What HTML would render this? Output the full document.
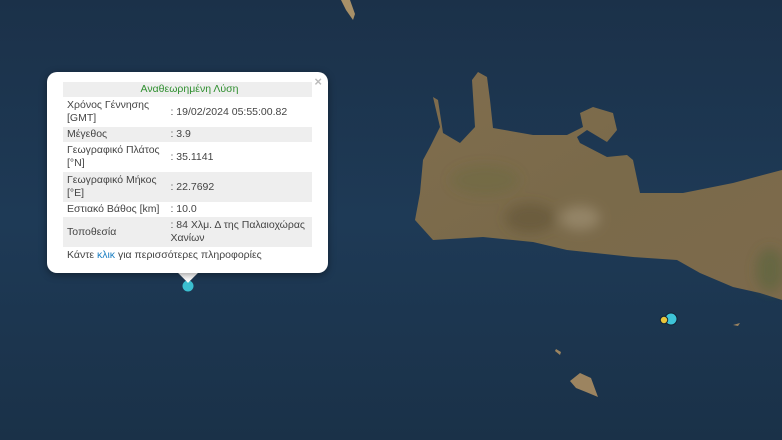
<!DOCTYPE html>
<html><head><meta charset="utf-8">
<style>
html,body{margin:0;padding:0;width:782px;height:440px;overflow:hidden;background:#1c3550;}
#map{position:absolute;left:0;top:0;width:782px;height:440px;}
.pop{position:absolute;left:47px;top:72px;width:281px;height:201px;background:#fff;border-radius:10px;box-shadow:0 2px 8px rgba(0,0,0,.4);font-family:"Liberation Sans","Noto Sans CJK SC",sans-serif;font-size:10.5px;color:#444;}
.tip{position:absolute;left:181px;top:266px;width:14px;height:14px;background:#fff;transform:rotate(45deg);}
.x{position:absolute;right:6px;top:2px;color:#bbb;font-size:13px;font-weight:bold;}
table{position:absolute;left:16px;top:10px;width:249px;border-collapse:collapse;}
td{padding:0 0 0 4px;vertical-align:middle;line-height:13px;}
tr.g td{background:#eeeeee;}
td.v{padding-left:6px;}
.h td{text-align:center;color:#2f8f2f;height:15px;}
.foot{position:absolute;left:20px;top:177px;}
.foot span{color:#1b7fc2;}
</style></head><body>
<svg id="map" viewBox="0 0 782 440">
<defs>
<linearGradient id="sea" x1="0" y1="0" x2="0" y2="1"><stop offset="0" stop-color="#1b3149"/><stop offset=".5" stop-color="#1e3a56"/><stop offset="1" stop-color="#1a3148"/></linearGradient>
<linearGradient id="land" x1="0" y1="0" x2="1" y2="1"><stop offset="0" stop-color="#806d4e"/><stop offset=".5" stop-color="#7a6a4a"/><stop offset="1" stop-color="#7d6a4c"/></linearGradient>
<filter id="bl"><feGaussianBlur stdDeviation="6"/></filter>
</defs>
<rect width="782" height="440" fill="url(#sea)"/>
<path fill="url(#land)" d="M433 97 L440 127 L430 147 L423 160 L420 193 L415 220 L433 240 L483 237 L533 242 L567 250 L633 257 L677 260 L700 273 L733 287 L760 293 L782 300 L782 170 L733 183 L683 193 L640 193 L633 160 L627 155 L607 157 L580 143 L577 137 L587 130 L607 142 L617 130 L613 113 L593 107 L580 113 L583 127 L567 135 L533 135 L493 128 L490 100 L487 77 L478 72 L472 80 L475 127 L460 143 L443 133 L438 100Z"/>
<g filter="url(#bl)">
<ellipse cx="530" cy="218" rx="25" ry="15" fill="#5c5030" opacity=".5"/>
<ellipse cx="580" cy="218" rx="20" ry="12" fill="#b3a48a" opacity=".45"/>
<ellipse cx="770" cy="270" rx="14" ry="22" fill="#4f6437" opacity=".5"/>
<ellipse cx="485" cy="180" rx="35" ry="15" fill="#5f6a3c" opacity=".3"/>
</g>
<path fill="#9c8460" d="M570 381 L580 373 L591 378 L598 397 L586 392 L576 388Z"/>
<path fill="#9c8460" d="M556 349 L561 352 L560 355 L555 351Z"/>
<path fill="#9c8460" d="M733 325 L740 323 L738 326Z"/>
<path fill="#a89068" d="M341 0 L350 0 L355 14 L353 20 L346 10Z"/>
<circle cx="188" cy="286" r="5.5" fill="#3bbfd0"/>
<circle cx="671" cy="319" r="6" fill="#3ec4d8" stroke="#123" stroke-width="1"/>
<circle cx="664" cy="320" r="3.7" fill="#e8c53a" stroke="#123" stroke-width="1"/>
</svg>
<div class="tip"></div>
<div class="pop">
<div class="x">×</div>
<table>
<tr class="g h"><td colspan="2">Αναθεωρημένη Λύση</td></tr>
<tr style="height:30px"><td>Χρόνος Γέννησης<br>[GMT]</td><td class="v">: 19/02/2024 05:55:00.82</td></tr>
<tr class="g" style="height:15px"><td>Μέγεθος</td><td class="v">: 3.9</td></tr>
<tr style="height:30px"><td>Γεωγραφικό Πλάτος<br>[°N]</td><td class="v">: 35.1141</td></tr>
<tr class="g" style="height:30px"><td>Γεωγραφικό Μήκος<br>[°E]</td><td class="v">: 22.7692</td></tr>
<tr style="height:15px"><td>Εστιακό Βάθος [km]</td><td class="v">: 10.0</td></tr>
<tr class="g" style="height:30px"><td>Τοποθεσία</td><td class="v">: 84 Χλμ. Δ της Παλαιοχώρας<br>Χανίων</td></tr>
</table>
<div class="foot">Κάντε <span>κλικ</span> για περισσότερες πληροφορίες</div>
</div>
</body></html>
